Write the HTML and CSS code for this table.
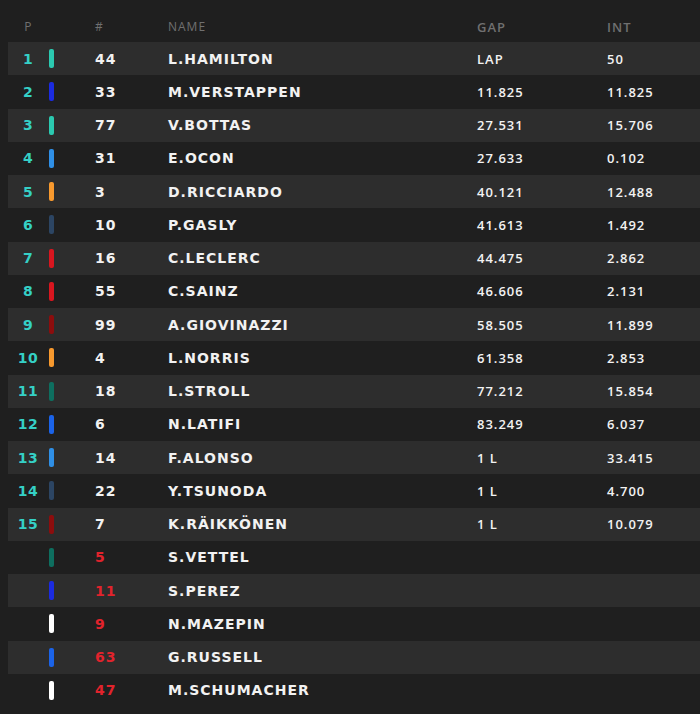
FILE: index.html
```html
<!DOCTYPE html>
<html>
<head>
<meta charset="utf-8">
<link rel="stylesheet" href="styles.css">
</head>
<body>
<div class="board">
  <div class="row head">
    <div class="pos">P</div><div></div><div class="num">#</div><div class="name">NAME</div><div class="gap">GAP</div><div class="int">INT</div>
  </div>
  <div class="row odd"><div class="pos">1</div><div><span class="bar mer"></span></div><div class="num">44</div><div class="name">L.HAMILTON</div><div class="gap">LAP</div><div class="int">50</div></div>
  <div class="row"><div class="pos">2</div><div><span class="bar rbr"></span></div><div class="num">33</div><div class="name">M.VERSTAPPEN</div><div class="gap">11.825</div><div class="int">11.825</div></div>
  <div class="row odd"><div class="pos">3</div><div><span class="bar mer"></span></div><div class="num">77</div><div class="name">V.BOTTAS</div><div class="gap">27.531</div><div class="int">15.706</div></div>
  <div class="row"><div class="pos">4</div><div><span class="bar alp"></span></div><div class="num">31</div><div class="name">E.OCON</div><div class="gap">27.633</div><div class="int">0.102</div></div>
  <div class="row odd"><div class="pos">5</div><div><span class="bar mcl"></span></div><div class="num">3</div><div class="name">D.RICCIARDO</div><div class="gap">40.121</div><div class="int">12.488</div></div>
  <div class="row"><div class="pos">6</div><div><span class="bar at"></span></div><div class="num">10</div><div class="name">P.GASLY</div><div class="gap">41.613</div><div class="int">1.492</div></div>
  <div class="row odd"><div class="pos">7</div><div><span class="bar fer"></span></div><div class="num">16</div><div class="name">C.LECLERC</div><div class="gap">44.475</div><div class="int">2.862</div></div>
  <div class="row"><div class="pos">8</div><div><span class="bar fer"></span></div><div class="num">55</div><div class="name">C.SAINZ</div><div class="gap">46.606</div><div class="int">2.131</div></div>
  <div class="row odd"><div class="pos">9</div><div><span class="bar alf"></span></div><div class="num">99</div><div class="name">A.GIOVINAZZI</div><div class="gap">58.505</div><div class="int">11.899</div></div>
  <div class="row"><div class="pos">10</div><div><span class="bar mcl"></span></div><div class="num">4</div><div class="name">L.NORRIS</div><div class="gap">61.358</div><div class="int">2.853</div></div>
  <div class="row odd"><div class="pos">11</div><div><span class="bar ast"></span></div><div class="num">18</div><div class="name">L.STROLL</div><div class="gap">77.212</div><div class="int">15.854</div></div>
  <div class="row"><div class="pos">12</div><div><span class="bar wil"></span></div><div class="num">6</div><div class="name">N.LATIFI</div><div class="gap">83.249</div><div class="int">6.037</div></div>
  <div class="row odd"><div class="pos">13</div><div><span class="bar alp"></span></div><div class="num">14</div><div class="name">F.ALONSO</div><div class="gap">1 L</div><div class="int">33.415</div></div>
  <div class="row"><div class="pos">14</div><div><span class="bar at"></span></div><div class="num">22</div><div class="name">Y.TSUNODA</div><div class="gap">1 L</div><div class="int">4.700</div></div>
  <div class="row odd"><div class="pos">15</div><div><span class="bar alf"></span></div><div class="num">7</div><div class="name">K.RÄIKKÖNEN</div><div class="gap">1 L</div><div class="int">10.079</div></div>
  <div class="row"><div class="pos"></div><div><span class="bar ast"></span></div><div class="num out">5</div><div class="name">S.VETTEL</div><div class="gap"></div><div class="int"></div></div>
  <div class="row odd"><div class="pos"></div><div><span class="bar rbr"></span></div><div class="num out">11</div><div class="name">S.PEREZ</div><div class="gap"></div><div class="int"></div></div>
  <div class="row"><div class="pos"></div><div><span class="bar has"></span></div><div class="num out">9</div><div class="name">N.MAZEPIN</div><div class="gap"></div><div class="int"></div></div>
  <div class="row odd"><div class="pos"></div><div><span class="bar wil"></span></div><div class="num out">63</div><div class="name">G.RUSSELL</div><div class="gap"></div><div class="int"></div></div>
  <div class="row"><div class="pos"></div><div><span class="bar has"></span></div><div class="num out">47</div><div class="name">M.SCHUMACHER</div><div class="gap"></div><div class="int"></div></div>
</div>
</body>
</html>
```
FILE: styles.css
```css
html, body {
  margin: 0;
  padding: 0;
  background: #1f1f1f;
}
.board {
  width: 700px;
  height: 714px;
  padding-left: 8px;
  box-sizing: border-box;
  font-family: "DejaVu Sans", sans-serif;
  color: #f2f2f2;
}
.row {
  display: grid;
  grid-template-columns: 40px 47px 73px 309px 130px 1fr;
  align-items: center;
  height: 33.25px;
}
.row.odd {
  background: #2d2d2d;
}
.row.head {
  height: 42px;
  align-items: start;
  padding-top: 20px;
  box-sizing: border-box;
  font-family: "Open Sans", sans-serif;
  font-size: 12px;
  line-height: 14px;
  letter-spacing: 1px;
  color: #707070;
}
.row.head .pos,
.row.head .num,
.row.head .name {
  font-family: "Open Sans", sans-serif;
  font-weight: 400;
  font-size: 12px;
  color: #707070;
}
.pos {
  text-align: center;
  font-weight: bold;
  font-size: 14px;
  color: #35d0c6;
  letter-spacing: 0.5px;
}
.bar {
  display: block;
  width: 5px;
  height: 19px;
  margin-left: 1px;
  border-radius: 2px;
}
.num {
  font-weight: bold;
  font-size: 14px;
  letter-spacing: 1px;
}
.num.out { color: #e2232c; }
.name {
  font-weight: bold;
  font-size: 14px;
  letter-spacing: 1px;
}
.gap, .int {
  font-family: "Open Sans", sans-serif;
  font-weight: 600;
  font-size: 13px;
  letter-spacing: 1px;
}
.mer { background: #2bc9b0; }
.rbr { background: #1b2be0; }
.alp { background: #2f8fe6; }
.mcl { background: #f7992e; }
.at  { background: #2c4563; }
.fer { background: #d8161f; }
.alf { background: #8c0d0d; }
.ast { background: #0e6e5f; }
.wil { background: #1b63e8; }
.has { background: #ffffff; }
```
